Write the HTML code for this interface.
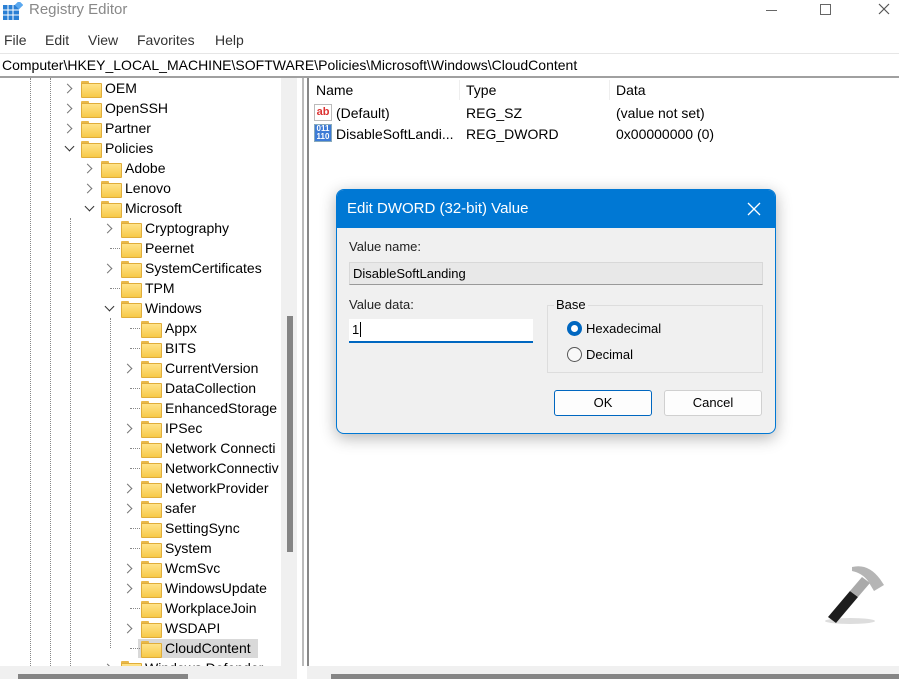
<!DOCTYPE html>
<html><head><style>
*{margin:0;padding:0;box-sizing:border-box}
body{width:899px;height:679px;overflow:hidden;background:#fff;font-family:"Liberation Sans",sans-serif;font-size:14px;color:#000;position:relative}
.a{position:absolute;white-space:nowrap}
.fold{position:absolute;width:19px;height:15px}
.fold:before{content:"";position:absolute;left:0;top:0;width:8px;height:4px;background:#e8b84a;border-radius:1px 1px 0 0}
.fold:after{content:"";position:absolute;left:0;top:2px;width:19px;height:13px;background:linear-gradient(#ffe38a,#f7c948);border:1px solid #e0ad3a;border-radius:1px}
.chev{position:absolute;width:7px;height:7px;border-right:1.5px solid #777;border-bottom:1.5px solid #777;transform:rotate(-45deg)}
.chev.d{transform:rotate(45deg);border-color:#333}
.vl{position:absolute;border-left:1px dotted #888;width:0}
.hl{position:absolute;border-top:1px dotted #888;height:0;width:10px}
</style></head><body>
<svg class="a" style="left:3px;top:2px" width="20" height="18"><rect x="0" y="3" width="16" height="15" fill="#2a7fd4"/><g stroke="#fff" stroke-width="1"><line x1="0" y1="8" x2="16" y2="8"/><line x1="0" y1="13" x2="16" y2="13"/><line x1="5" y1="3" x2="5" y2="18"/><line x1="10" y1="3" x2="10" y2="18"/></g><rect x="13" y="0" width="6" height="6" fill="#5aa8ef" transform="rotate(45 16 3)"/></svg>
<div class="a" style="left:29px;top:1px;font-size:15px;color:#888">Registry Editor</div>
<div class="a" style="left:766px;top:10px;width:11px;border-top:1px solid #666"></div>
<div class="a" style="left:820px;top:4px;width:11px;height:11px;border:1px solid #666"></div>
<svg class="a" style="left:878px;top:3px" width="12" height="12"><path d="M1 1L11 11M11 1L1 11" stroke="#555" stroke-width="1.2"/></svg>
<div class="a" style="left:4px;top:32px;color:#333">File</div>
<div class="a" style="left:45px;top:32px;color:#333">Edit</div>
<div class="a" style="left:88px;top:32px;color:#333">View</div>
<div class="a" style="left:137px;top:32px;color:#333">Favorites</div>
<div class="a" style="left:215px;top:32px;color:#333">Help</div>
<div class="a" style="left:0;top:53px;width:899px;height:1px;background:#e6e6e6"></div>
<div class="a" style="left:2px;top:57px;font-size:14px">Computer\HKEY_LOCAL_MACHINE\SOFTWARE\Policies\Microsoft\Windows\CloudContent</div>
<div class="a" style="left:0;top:76px;width:899px;height:2px;background:#a0a0a0"></div>
<div class="a" style="left:281px;top:78px;width:16px;height:594px;background:#f0f0f0"></div>
<div class="a" style="left:287px;top:316px;width:6px;height:236px;background:#858585"></div>
<div class="a" style="left:302px;top:78px;width:2px;height:601px;background:#bbb"></div>
<div class="a" style="left:307px;top:78px;width:2px;height:601px;background:#888"></div>
<div class="a" style="left:0;top:666px;width:899px;height:13px;background:#f0f0f0"></div>
<div class="a" style="left:331px;top:674px;width:568px;height:5px;background:#858585"></div>
<div class="a" style="left:297px;top:666px;width:10px;height:13px;background:#fff"></div>
<div class="vl" style="left:30px;top:78px;height:588px"></div>
<div class="vl" style="left:50px;top:78px;height:588px"></div>
<div class="vl" style="left:70px;top:218px;height:448px"></div>
<div class="vl" style="left:110px;top:318px;height:330px"></div>
<div id="tree"></div>
<script>
var rows=[["OEM",0,"c"],["OpenSSH",0,"c"],["Partner",0,"c"],["Policies",0,"d"],["Adobe",1,"c"],["Lenovo",1,"c"],["Microsoft",1,"d"],["Cryptography",2,"c"],["Peernet",2,"n"],["SystemCertificates",2,"c"],["TPM",2,"n"],["Windows",2,"d"],["Appx",3,"n"],["BITS",3,"n"],["CurrentVersion",3,"c"],["DataCollection",3,"n"],["EnhancedStorage",3,"n"],["IPSec",3,"c"],["Network Connecti",3,"n"],["NetworkConnectiv",3,"n"],["NetworkProvider",3,"c"],["safer",3,"c"],["SettingSync",3,"n"],["System",3,"n"],["WcmSvc",3,"c"],["WindowsUpdate",3,"c"],["WorkplaceJoin",3,"n"],["WSDAPI",3,"c"],["CloudContent",3,"n"],["Windows Defender",2,"c"]];
var h="";rows.forEach(function(r,i){var y=78+i*20,l=r[1]*20;
if(r[0]=="CloudContent")h+='<div class="a" style="left:138px;top:'+(y+1)+'px;width:120px;height:19px;background:#d9d9d9"></div>';
if(r[2]=="c")h+='<div class="chev" style="left:'+(64+l)+'px;top:'+(y+7)+'px"></div>';
else if(r[2]=="d")h+='<div class="chev d" style="left:'+(66+l)+'px;top:'+(y+5)+'px"></div>';
else h+='<div class="hl" style="left:'+(70+l)+'px;top:'+(y+10)+'px"></div>';
h+='<div class="fold" style="left:'+(81+l)+'px;top:'+(y+3)+'px"></div>';
h+='<div class="a" style="left:'+(105+l)+'px;top:'+(y+2)+'px;font-size:14px">'+r[0]+'</div>';});
document.getElementById("tree").innerHTML=h;
</script>
<div class="a" style="left:0;top:666px;width:281px;height:13px;background:#f0f0f0"></div>
<div class="a" style="left:18px;top:674px;width:170px;height:5px;background:#858585"></div>
<div class="a" style="left:316px;top:82px">Name</div>
<div class="a" style="left:466px;top:82px">Type</div>
<div class="a" style="left:616px;top:82px">Data</div>
<div class="a" style="left:459px;top:80px;width:1px;height:20px;background:#eee"></div>
<div class="a" style="left:609px;top:80px;width:1px;height:20px;background:#eee"></div>
<div class="a" style="left:314px;top:104px;width:18px;height:17px;background:#fff;border:1px solid #bbb;color:#d33;font-size:11px;font-weight:bold;line-height:14px;text-align:center">ab</div>
<div class="a" style="left:336px;top:105px">(Default)</div>
<div class="a" style="left:466px;top:105px">REG_SZ</div>
<div class="a" style="left:616px;top:105px">(value not set)</div>
<div class="a" style="left:314px;top:124px;width:18px;height:18px;background:#3d7bd6;border:1px solid #8ab;color:#fff;font-size:8px;font-weight:bold;line-height:8px;text-align:center">011<br>110</div>
<div class="a" style="left:336px;top:126px">DisableSoftLandi...</div>
<div class="a" style="left:466px;top:126px">REG_DWORD</div>
<div class="a" style="left:616px;top:126px">0x00000000 (0)</div>
<svg class="a" style="left:810px;top:555px" width="80" height="75"><ellipse cx="40" cy="66" rx="25" ry="3" fill="#ddd"/><path d="M18 62 L40 36 L48 42 L26 68 Z" fill="#1d1d1d"/><path d="M40 36 L52 22 L60 28 L48 42 Z" fill="#aaa"/><path d="M42 12 Q58 8 70 24 L74 30 L64 36 L58 26 Q52 18 42 16 Z" fill="#b5b5b5"/></svg>
<div class="a" style="left:336px;top:189px;width:440px;height:245px;background:#f0f0f0;border:1px solid #0078d4;border-radius:8px;box-shadow:0 4px 16px rgba(0,0,0,.3);overflow:hidden">
<div style="height:38px;background:#0078d4;color:#fff;font-size:15px;padding:10px 0 0 10px">Edit DWORD (32-bit) Value</div>
<svg class="a" style="left:410px;top:12px" width="14" height="14"><path d="M1 1L13 13M13 1L1 13" stroke="#fff" stroke-width="1.3"/></svg>
<div class="a" style="left:12px;top:49px;font-size:13px;color:#222">Value name:</div>
<div class="a" style="left:12px;top:72px;width:414px;height:23px;background:#e8e8e8;border:1px solid #d8d8d8;border-bottom-color:#999;font-size:13px;padding:3px 0 0 3px">DisableSoftLanding</div>
<div class="a" style="left:12px;top:107px;font-size:13px;color:#222">Value data:</div>
<div class="a" style="left:12px;top:129px;width:184px;height:24px;background:#fff;border-bottom:2px solid #0067c0;font-size:13px;padding:3px 0 0 3px">1<span style="border-left:1px solid #000;margin-left:1px"></span></div>
<div class="a" style="left:210px;top:115px;width:216px;height:68px;border:1px solid #ddd"></div>
<div class="a" style="left:217px;top:107px;font-size:13px;background:#f0f0f0;padding:0 2px">Base</div>
<div class="a" style="left:230px;top:131px;width:15px;height:15px;border-radius:50%;background:#0067c0"><div style="margin:4px;width:7px;height:7px;border-radius:50%;background:#fff"></div></div>
<div class="a" style="left:249px;top:131px;font-size:13px">Hexadecimal</div>
<div class="a" style="left:230px;top:157px;width:15px;height:15px;border-radius:50%;border:1px solid #555;background:#f8f8f8"></div>
<div class="a" style="left:249px;top:157px;font-size:13px">Decimal</div>
<div class="a" style="left:217px;top:200px;width:98px;height:26px;background:#fdfdfd;border:1px solid #0067c0;border-radius:3px;text-align:center;font-size:13px;line-height:24px">OK</div>
<div class="a" style="left:327px;top:200px;width:98px;height:26px;background:#fdfdfd;border:1px solid #d0d0d0;border-radius:3px;text-align:center;font-size:13px;line-height:24px">Cancel</div>
</div>
</body></html>
